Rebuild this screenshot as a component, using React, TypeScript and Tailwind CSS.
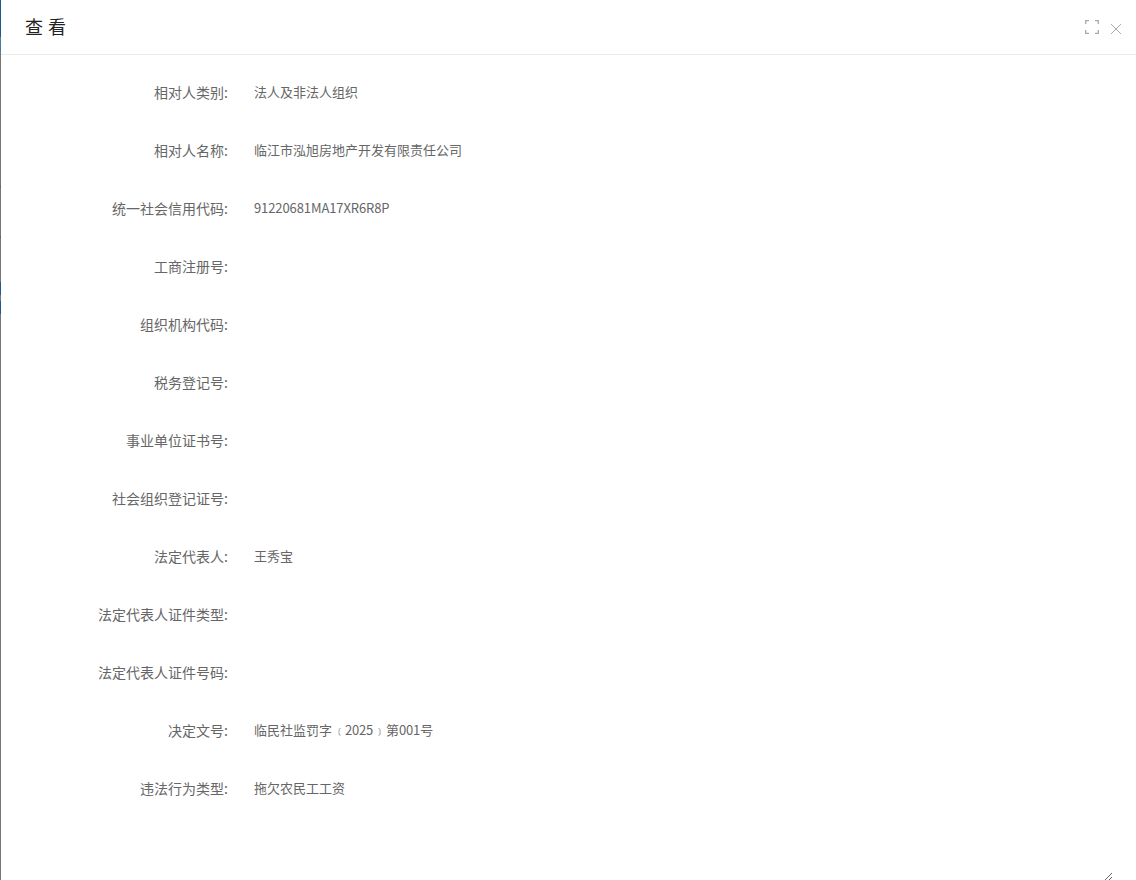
import type { ReactNode } from "react";

const rows: [string, ReactNode][] = [
  ["相对人类别:", "法人及非法人组织"],
  ["相对人名称:", "临江市泓旭房地产开发有限责任公司"],
  ["统一社会信用代码:", <span className="tracking-[-0.1px]">91220681MA17XR6R8P</span>],
  ["工商注册号:", ""],
  ["组织机构代码:", ""],
  ["税务登记号:", ""],
  ["事业单位证书号:", ""],
  ["社会组织登记证号:", ""],
  ["法定代表人:", "王秀宝"],
  ["法定代表人证件类型:", ""],
  ["法定代表人证件号码:", ""],
  [
    "决定文号:",
    <>
      临民社监罚字
      <span className="ml-[1px] mr-[4px] text-[8px]">〔</span>
      <span className="tracking-[-0.2px]">2025</span>
      <span className="ml-[5px] text-[8px]">〕</span>
      第<span className="tracking-[-0.2px]">001</span>号
    </>,
  ],
  ["违法行为类型:", "拖欠农民工工资"],
];

export default function App() {
  return (
    <div className="flex h-[880px] w-[1136px] overflow-hidden bg-white font-['Noto_Sans_CJK_SC','Noto_Sans',sans-serif] text-[13px] text-[#666]">
      <div className="flex w-px shrink-0 flex-col bg-[#777]">
        <div className="h-[37px] bg-[#1c5a94]" />
        <div className="h-[3px]" />
        <div className="h-[12px] bg-[#4a7a9c]" />
        <div className="h-[133px]" />
        <div className="h-[3px] bg-[#8a5a5a]" />
        <div className="h-[48px]" />
        <div className="h-[2px] bg-[#3f6f8f]" />
        <div className="h-[44px]" />
        <div className="h-[13px] bg-[#1c5a94]" />
        <div className="h-[6px]" />
        <div className="h-[13px] bg-[#1c5a94]" />
      </div>
      <div className="flex min-w-0 flex-1 flex-col">
        <header className="flex h-[55px] shrink-0 items-center justify-between border-b border-[#ebebeb] pl-[24px] pr-[14px]">
          <h1 className="-mt-[3px] text-[18px] leading-none tracking-[5px] text-[#222]">查看</h1>
          <div className="flex items-center gap-[11px]">
            <svg width="14" height="14" viewBox="0 0 14 14" fill="none" stroke="#aaa" strokeWidth="1.3" className="-ml-[1px]">
              <path d="M0.7 4V0.7h3.3M10 0.7h3.3V4M13.3 10v3.3H10M4 13.3H0.7V10" />
            </svg>
            <svg width="12" height="12" viewBox="0 0 12 12" fill="none" stroke="#aaa" strokeWidth="1" className="mt-[3px]">
              <path d="M1 1l10 10M11 1L1 11" />
            </svg>
          </div>
        </header>
        <main className="flex min-h-0 flex-1 flex-col pt-[8px]">
          {rows.map(([label, value]) => (
            <div key={label} className="flex h-[58px] shrink-0 items-center">
              <div className="w-[227px] shrink-0 text-right text-[14px]">{label}</div>
              <div className="pl-[26px]">{value}</div>
            </div>
          ))}
          <div className="mr-[23px] flex justify-end">
            <textarea className="mt-[-2px] h-[66px] w-[400px] shrink-0 border-0 bg-transparent outline-none" readOnly />
          </div>
        </main>
      </div>
    </div>
  );
}
